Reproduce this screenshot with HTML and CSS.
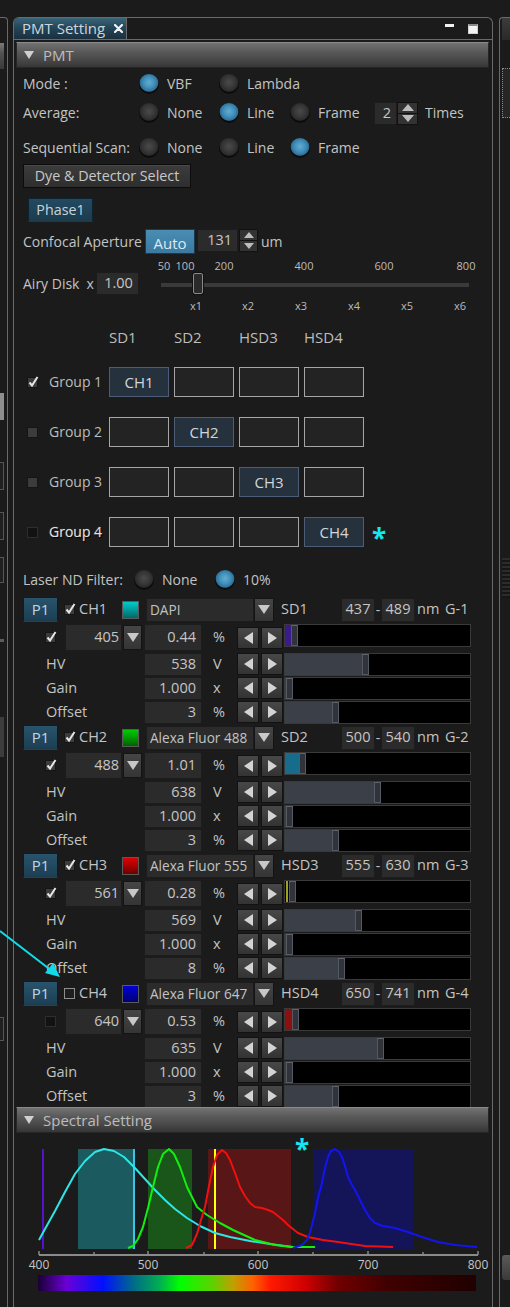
FILE: index.html
```html
<!DOCTYPE html>
<html lang="en">
<head>
<meta charset="utf-8">
<title>PMT Setting</title>
<link rel="stylesheet" href="styles.css">
</head>
<body>
<div class="desk">
  <aside class="dock-left">
    <div class="dock-left-pane">
      <div class="dl-head"></div>
      <div class="dl-item dl-light"></div>
      <div class="dl-item dl-box b1"></div>
      <div class="dl-item dl-box b2"></div>
      <div class="dl-item dl-box b3"></div>
      <div class="dl-item dl-line l1"></div>
      <div class="dl-item dl-line l2"></div>
      <div class="dl-item dl-box b4"></div>
    </div>
  </aside>

  <section class="panel">
    <div class="tabstrip">
      <div class="tab">PMT Setting
        <svg class="tab-close" width="9" height="9" viewBox="0 0 9 9"><path d="M1 1L8 8M8 1L1 8" stroke="#f2f2f2" stroke-width="2.2" stroke-linecap="round"/></svg>
      </div>
      <div class="win-btns"><span class="win-min"></span><span class="win-max"></span></div>
    </div>

    <div class="panel-body">
      <div class="group-head"><span class="caret"></span>PMT</div>

      <div class="pmt">
        <div class="opt-row">
          <span class="opt-label">Mode :</span>
          <span class="opt"><i class="radio on"></i>VBF</span>
          <span class="opt"><i class="radio"></i>Lambda</span>
        </div>
        <div class="opt-row avg">
          <span class="opt-label">Average:</span>
          <span class="opt"><i class="radio"></i>None</span>
          <span class="opt"><i class="radio on"></i>Line</span>
          <span class="opt"><i class="radio"></i>Frame</span>
          <span class="spin-wrap">
            <span class="fld spin-fld">2</span>
            <span class="spin"><span class="sp up"></span><span class="sp down"></span></span>
            <span class="times">Times</span>
          </span>
        </div>
        <div class="opt-row seq">
          <span class="opt-label">Sequential Scan:</span>
          <span class="opt"><i class="radio"></i>None</span>
          <span class="opt"><i class="radio"></i>Line</span>
          <span class="opt"><i class="radio on"></i>Frame</span>
        </div>

        <div class="btn dye-btn">Dye &amp; Detector Select</div>
        <div class="btn phase-btn">Phase1</div>

        <div class="conf-row">
          <span class="conf-label">Confocal Aperture</span>
          <span class="auto-btn">Auto</span>
          <span class="fld conf-fld">131</span>
          <span class="spin small"><span class="sp up"></span><span class="sp down"></span></span>
          <span class="um">um</span>
        </div>

        <div class="airy">
          <div class="airy-left"><span>Airy Disk</span><span class="airy-x">x</span><span class="fld airy-fld">1.00</span></div>
          <div class="slider">
            <span class="tick-top" style="left:20px">50</span>
            <span class="tick-top" style="left:41px">100</span>
            <span class="tick-top" style="left:80px">200</span>
            <span class="tick-top" style="left:160px">400</span>
            <span class="tick-top" style="left:240px">600</span>
            <span class="tick-top" style="left:322px">800</span>
            <span class="track"></span>
            <span class="knob" style="left:49px"></span>
            <span class="tick-bot" style="left:52px">x1</span>
            <span class="tick-bot" style="left:104px">x2</span>
            <span class="tick-bot" style="left:157px">x3</span>
            <span class="tick-bot" style="left:210px">x4</span>
            <span class="tick-bot" style="left:263px">x5</span>
            <span class="tick-bot" style="left:316px">x6</span>
          </div>
        </div>

        <div class="det-grid">
          <span></span><span class="det-h">SD1</span><span class="det-h">SD2</span><span class="det-h">HSD3</span><span class="det-h">HSD4</span><span></span>

          <span class="grp"><i class="chk on"><svg viewBox="0 0 12 12"><path d="M2.5 6.5L5 9.5L10.5 1" fill="none" stroke="#e6e6e6" stroke-width="2"/></svg></i>Group 1</span>
          <span class="slot on">CH1</span><span class="slot"></span><span class="slot"></span><span class="slot"></span><span></span>

          <span class="grp"><i class="chk"></i>Group 2</span>
          <span class="slot"></span><span class="slot on">CH2</span><span class="slot"></span><span class="slot"></span><span></span>

          <span class="grp"><i class="chk"></i>Group 3</span>
          <span class="slot"></span><span class="slot"></span><span class="slot on">CH3</span><span class="slot"></span><span></span>

          <span class="grp dim"><i class="chk off"></i>Group 4</span>
          <span class="slot"></span><span class="slot"></span><span class="slot"></span><span class="slot on">CH4</span><span class="mark">*</span>
        </div>

        <div class="nd-row">
          <span class="nd-label">Laser ND Filter:</span>
          <span class="opt"><i class="radio"></i>None</span>
          <span class="opt"><i class="radio on"></i>10%</span>
        </div>

        <div class="channels">
          <!-- CH1 -->
          <div class="ch">
            <div class="ch-head">
              <span class="pbtn">P1</span>
              <span class="ch-name"><i class="chk on"><svg viewBox="0 0 12 12"><path d="M2.5 6.5L5 9.5L10.5 1" fill="none" stroke="#e6e6e6" stroke-width="2"/></svg></i>CH1</span>
              <span class="swatch sw-cyan"></span>
              <span class="combo"><span class="combo-val">DAPI</span><span class="drop"></span></span>
              <span class="det">SD1</span>
              <span class="fld nm">437</span><span class="dash">-</span><span class="fld nm">489</span>
              <span class="nm-u">nm</span><span class="gname">G-1</span>
            </div>
            <div class="ch-row laser">
              <span class="lcell"><i class="chk on"><svg viewBox="0 0 12 12"><path d="M2.5 6.5L5 9.5L10.5 1" fill="none" stroke="#e6e6e6" stroke-width="2"/></svg></i></span>
              <span class="fld wl">405</span><span class="drop wl-drop"></span>
              <span class="fld val">0.44</span><span class="unit">%</span>
              <span class="step l"></span><span class="step r"></span>
              <span class="bar"><span class="fill" style="width:6px;background:#3b1a8c"></span><span class="thumb"></span></span>
            </div>
            <div class="ch-row">
              <span class="lbl">HV</span><span class="fld val">538</span><span class="unit">V</span>
              <span class="step l"></span><span class="step r"></span>
              <span class="bar"><span class="fill" style="width:77px"></span><span class="thumb"></span></span>
            </div>
            <div class="ch-row">
              <span class="lbl">Gain</span><span class="fld val">1.000</span><span class="unit">x</span>
              <span class="step l"></span><span class="step r"></span>
              <span class="bar"><span class="fill" style="width:1px"></span><span class="thumb"></span></span>
            </div>
            <div class="ch-row">
              <span class="lbl">Offset</span><span class="fld val">3</span><span class="unit">%</span>
              <span class="step l"></span><span class="step r"></span>
              <span class="bar"><span class="fill" style="width:47px"></span><span class="thumb"></span></span>
            </div>
          </div>

          <!-- CH2 -->
          <div class="ch">
            <div class="ch-head">
              <span class="pbtn">P1</span>
              <span class="ch-name"><i class="chk on"><svg viewBox="0 0 12 12"><path d="M2.5 6.5L5 9.5L10.5 1" fill="none" stroke="#e6e6e6" stroke-width="2"/></svg></i>CH2</span>
              <span class="swatch sw-green"></span>
              <span class="combo"><span class="combo-val">Alexa Fluor 488</span><span class="drop"></span></span>
              <span class="det">SD2</span>
              <span class="fld nm">500</span><span class="dash">-</span><span class="fld nm">540</span>
              <span class="nm-u">nm</span><span class="gname">G-2</span>
            </div>
            <div class="ch-row laser">
              <span class="lcell"><i class="chk on"><svg viewBox="0 0 12 12"><path d="M2.5 6.5L5 9.5L10.5 1" fill="none" stroke="#e6e6e6" stroke-width="2"/></svg></i></span>
              <span class="fld wl">488</span><span class="drop wl-drop"></span>
              <span class="fld val">1.01</span><span class="unit">%</span>
              <span class="step l"></span><span class="step r"></span>
              <span class="bar"><span class="fill" style="width:14px;background:#176c8c"></span><span class="thumb"></span></span>
            </div>
            <div class="ch-row">
              <span class="lbl">HV</span><span class="fld val">638</span><span class="unit">V</span>
              <span class="step l"></span><span class="step r"></span>
              <span class="bar"><span class="fill" style="width:89px"></span><span class="thumb"></span></span>
            </div>
            <div class="ch-row">
              <span class="lbl">Gain</span><span class="fld val">1.000</span><span class="unit">x</span>
              <span class="step l"></span><span class="step r"></span>
              <span class="bar"><span class="fill" style="width:1px"></span><span class="thumb"></span></span>
            </div>
            <div class="ch-row">
              <span class="lbl">Offset</span><span class="fld val">3</span><span class="unit">%</span>
              <span class="step l"></span><span class="step r"></span>
              <span class="bar"><span class="fill" style="width:47px"></span><span class="thumb"></span></span>
            </div>
          </div>

          <!-- CH3 -->
          <div class="ch">
            <div class="ch-head">
              <span class="pbtn">P1</span>
              <span class="ch-name"><i class="chk on"><svg viewBox="0 0 12 12"><path d="M2.5 6.5L5 9.5L10.5 1" fill="none" stroke="#e6e6e6" stroke-width="2"/></svg></i>CH3</span>
              <span class="swatch sw-red"></span>
              <span class="combo"><span class="combo-val">Alexa Fluor 555</span><span class="drop"></span></span>
              <span class="det">HSD3</span>
              <span class="fld nm">555</span><span class="dash">-</span><span class="fld nm">630</span>
              <span class="nm-u">nm</span><span class="gname">G-3</span>
            </div>
            <div class="ch-row laser">
              <span class="lcell"><i class="chk on"><svg viewBox="0 0 12 12"><path d="M2.5 6.5L5 9.5L10.5 1" fill="none" stroke="#e6e6e6" stroke-width="2"/></svg></i></span>
              <span class="fld wl">561</span><span class="drop wl-drop"></span>
              <span class="fld val">0.28</span><span class="unit">%</span>
              <span class="step l"></span><span class="step r"></span>
              <span class="bar"><span class="fill fill-line" style="width:4px"></span><span class="thumb"></span></span>
            </div>
            <div class="ch-row">
              <span class="lbl">HV</span><span class="fld val">569</span><span class="unit">V</span>
              <span class="step l"></span><span class="step r"></span>
              <span class="bar"><span class="fill" style="width:70px"></span><span class="thumb"></span></span>
            </div>
            <div class="ch-row">
              <span class="lbl">Gain</span><span class="fld val">1.000</span><span class="unit">x</span>
              <span class="step l"></span><span class="step r"></span>
              <span class="bar"><span class="fill" style="width:1px"></span><span class="thumb"></span></span>
            </div>
            <div class="ch-row">
              <span class="lbl">Offset</span><span class="fld val">8</span><span class="unit">%</span>
              <span class="step l"></span><span class="step r"></span>
              <span class="bar"><span class="fill" style="width:53px"></span><span class="thumb"></span></span>
            </div>
          </div>

          <!-- CH4 -->
          <div class="ch">
            <div class="ch-head">
              <span class="pbtn">P1</span>
              <span class="ch-name"><i class="chk box"></i>CH4</span>
              <span class="swatch sw-blue"></span>
              <span class="combo"><span class="combo-val">Alexa Fluor 647</span><span class="drop"></span></span>
              <span class="det">HSD4</span>
              <span class="fld nm">650</span><span class="dash">-</span><span class="fld nm">741</span>
              <span class="nm-u">nm</span><span class="gname">G-4</span>
            </div>
            <div class="ch-row laser">
              <span class="lcell"><i class="chk off"></i></span>
              <span class="fld wl">640</span><span class="drop wl-drop"></span>
              <span class="fld val">0.53</span><span class="unit">%</span>
              <span class="step l"></span><span class="step r"></span>
              <span class="bar"><span class="fill" style="width:7px;background:#8c1010"></span><span class="thumb"></span></span>
            </div>
            <div class="ch-row">
              <span class="lbl">HV</span><span class="fld val">635</span><span class="unit">V</span>
              <span class="step l"></span><span class="step r"></span>
              <span class="bar"><span class="fill" style="width:92px"></span><span class="thumb"></span></span>
            </div>
            <div class="ch-row">
              <span class="lbl">Gain</span><span class="fld val">1.000</span><span class="unit">x</span>
              <span class="step l"></span><span class="step r"></span>
              <span class="bar"><span class="fill" style="width:1px"></span><span class="thumb"></span></span>
            </div>
            <div class="ch-row">
              <span class="lbl">Offset</span><span class="fld val">3</span><span class="unit">%</span>
              <span class="step l"></span><span class="step r"></span>
              <span class="bar"><span class="fill" style="width:47px"></span><span class="thumb"></span></span>
            </div>
          </div>
        </div>
      </div>

      <div class="group-head spectral-head"><span class="caret"></span>Spectral Setting</div>

      <svg class="spectrum" width="478" height="184" viewBox="14 1123 478 184">
        <defs>
          <linearGradient id="vis" x1="0" x2="1" y1="0" y2="0">
            <stop offset="0" stop-color="#1a0033"/>
            <stop offset="0.066" stop-color="#6a00d8"/>
            <stop offset="0.148" stop-color="#0010ff"/>
            <stop offset="0.217" stop-color="#006a8a"/>
            <stop offset="0.279" stop-color="#00b050"/>
            <stop offset="0.324" stop-color="#00ff00"/>
            <stop offset="0.4" stop-color="#60d000"/>
            <stop offset="0.445" stop-color="#c0a000"/>
            <stop offset="0.491" stop-color="#ff6000"/>
            <stop offset="0.53" stop-color="#ff1a00"/>
            <stop offset="0.61" stop-color="#d00000"/>
            <stop offset="0.685" stop-color="#700000"/>
            <stop offset="0.8" stop-color="#400000"/>
            <stop offset="1" stop-color="#200000"/>
          </linearGradient>
        </defs>
        <!-- detection windows -->
        <rect x="78" y="1149" width="56" height="100" fill="#1b5b5f"/>
        <rect x="148" y="1149" width="44" height="100" fill="#1a561a"/>
        <rect x="208" y="1149" width="83" height="100" fill="#581616"/>
        <rect x="313" y="1149" width="100" height="100" fill="#141458"/>
        <!-- laser lines -->
        <rect x="42" y="1149" width="2" height="100" fill="#5512cc"/>
        <rect x="133" y="1149" width="2" height="100" fill="#3cc4e6"/>
        <rect x="214" y="1149" width="2" height="100" fill="#ffff10"/>
        <!-- emission curves -->
        <polyline fill="none" stroke="#2ee6e6" stroke-width="2" stroke-linejoin="round" points="39,1240 45,1229 55,1211 65,1192 75,1174 85,1161 95,1152 104,1149 114,1151 124,1157 134,1167 145,1179 155,1190 165,1200 175,1209 187,1218 200,1226 215,1233 230,1237 250,1241 270,1244 292,1247"/>
        <polyline fill="none" stroke="#10f010" stroke-width="2" stroke-linejoin="round" points="128,1248 133,1246 138,1239 143,1227 148,1208 153,1187 158,1167 163,1154 169,1149 174,1154 180,1167 187,1187 197,1207 207,1215 220,1223 233,1230 255,1240 275,1245 293,1247 315,1247"/>
        <polyline fill="none" stroke="#f01010" stroke-width="2" stroke-linejoin="round" points="186,1248 192,1245 197,1234 201,1220 205,1207 209,1186 213,1167 217,1155 222,1150 226,1153 230,1160 235,1173 240,1187 245,1196 250,1203 255,1207 262,1208 268,1210 273,1212 278,1216 283,1220 288,1225 298,1233 308,1237 323,1240 338,1242 365,1246 393,1247"/>
        <polyline fill="none" stroke="#1414f0" stroke-width="2" stroke-linejoin="round" points="293,1248 302,1245 307,1240 310,1233 315,1213 318,1198 322,1183 325,1168 328,1157 331,1151 335,1149 339,1152 342,1157 345,1166 348,1177 352,1185 355,1190 360,1200 365,1210 370,1218 375,1223 383,1226 395,1228 408,1232 422,1237 438,1242 455,1245 477,1247"/>
        <!-- wavelength axis -->
        <line x1="39" y1="1255" x2="478" y2="1255" stroke="#8a8a8a" stroke-width="2"/>
        <g stroke="#8a8a8a" stroke-width="1.5">
          <line x1="39" y1="1251" x2="39" y2="1255"/>
          <line x1="94" y1="1252" x2="94" y2="1255"/>
          <line x1="148" y1="1251" x2="148" y2="1255"/>
          <line x1="204" y1="1252" x2="204" y2="1255"/>
          <line x1="258" y1="1251" x2="258" y2="1255"/>
          <line x1="313" y1="1252" x2="313" y2="1255"/>
          <line x1="368" y1="1251" x2="368" y2="1255"/>
          <line x1="423" y1="1252" x2="423" y2="1255"/>
          <line x1="478" y1="1251" x2="478" y2="1255"/>
        </g>
        <g class="axis-txt" text-anchor="middle">
          <text x="39" y="1269">400</text>
          <text x="148" y="1269">500</text>
          <text x="258" y="1269">600</text>
          <text x="368" y="1269">700</text>
          <text x="478" y="1269">800</text>
        </g>
        <rect x="38" y="1275" width="438" height="16" fill="url(#vis)"/>
        <text class="spec-mark" x="302" y="1159" text-anchor="middle">*</text>
      </svg>
    </div>
  </section>

  <aside class="dock-right">
    <div class="dock-right-pane">
      <div class="dr-tab"></div>
      <div class="dr-scroll"></div>
      <div class="dr-rail"></div>
      <div class="dr-btn"></div>
    </div>
  </aside>
</div>

<svg class="callout" width="70" height="60" viewBox="0 925 70 60">
  <line x1="0" y1="931" x2="52" y2="971" stroke="#12dcea" stroke-width="2"/>
  <polygon points="60,977 45,973 53,963" fill="#12dcea"/>
</svg>
</body>
</html>
```

FILE: styles.css
```css
* { box-sizing: border-box; margin: 0; padding: 0; }

html, body { background: #1b1b1b; }

body {
  width: 510px;
  height: 1307px;
  overflow: hidden;
  position: relative;
  font-family: "Open Sans", "Noto Sans", "DejaVu Sans", sans-serif;
  font-size: 14px;
  line-height: 1;
  color: #c3c3c3;
}

.desk {
  display: flex;
  height: 1307px;
  padding-top: 17px;
}

/* ---- neighbouring docked panes ---- */
.dock-left { width: 13px; flex: none; }
.dock-left-pane {
  width: 8px;
  height: 100%;
  border-top: 1px solid #6a6a6a;
  border-right: 1px solid #6a6a6a;
  border-top-right-radius: 4px;
  display: flex;
  flex-direction: column;
}
.dl-head {
  margin-top: 25px;
  height: 26px;
  width: 4px;
  background: linear-gradient(#7a7a7a, #525252 40%, #3a3a3a);
}
.dl-item { width: 4px; flex: none; }
.dl-light { margin-top: 324px; height: 27px; background: #8e8e8e; }
.dl-box { border: 1px solid #555; border-left: 0; background: #202020; }
.b1 { margin-top: 42px; height: 28px; }
.b2 { margin-top: 22px; height: 28px; }
.b3 { margin-top: 17px; height: 26px; }
.dl-line { height: 3px; background: #5c5c5c; }
.l1 { margin-top: 56px; }
.l2 { margin-top: 75px; height: 40px; background: #3c3c3c; }
.b4 { margin-top: 260px; height: 24px; }

.dock-right { width: 17px; flex: none; }
.dock-right-pane {
  margin-left: 6px;
  height: 100%;
  border-left: 1px solid #6a6a6a;
  border-top: 1px solid #6a6a6a;
  border-top-left-radius: 4px;
  display: flex;
  flex-direction: column;
  padding-left: 2px;
}
.dr-tab { height: 22px; background: linear-gradient(#3c3c3c, #2a2a2a); }
.dr-scroll {
  margin-top: 28px;
  height: 50px;
  border: 1px dotted #8a8a8a;
  border-right: 0;
  background: #262626;
}
.dr-rail { margin-top: 440px; height: 40px; background: repeating-linear-gradient(#2c2c2c 0 2px, #161616 2px 4px); }
.dr-btn {
  margin-top: 657px;
  height: 25px;
  border-radius: 3px 0 0 3px;
  background: linear-gradient(#5a5a5a, #3a3a3a);
}

/* ---- main panel frame ---- */
.panel {
  width: 480px;
  flex: none;
  border: 1px solid #6a6a6a;
  border-bottom: 0;
  border-radius: 6px 6px 0 0;
  display: flex;
  flex-direction: column;
}

.tabstrip { height: 23px; display: flex; align-items: stretch; }
.tab {
  width: 113px;
  border-right: 1px solid #6a6a6a;
  border-top-left-radius: 5px;
  background: linear-gradient(#3b6579, #24465a 45%, #1a3040);
  display: flex;
  align-items: center;
  gap: 9px;
  padding-left: 8px;
  font-size: 15px;
  color: #cdd6dc;
}
.tab-close { display: block; }

.win-btns {
  margin-left: auto;
  display: flex;
  align-items: flex-start;
  padding-top: 6px;
}
.win-min { width: 9px; height: 3px; background: #f0f0f0; margin-right: 14px; }
.win-max {
  width: 10px;
  height: 10px;
  background: #f4f4f4;
  border: 1px solid #cfcfcf;
  border-top: 2px solid #8a8a8a;
  margin-right: 14px;
}

.panel-body {
  flex: 1;
  border-top: 1px solid #6a6a6a;
  display: flex;
  flex-direction: column;
}

.group-head {
  margin: 2px 3px 0 2px;
  height: 26px;
  flex: none;
  border: 1px solid #262626;
  border-top-color: #8a8a8a;
  background: linear-gradient(#727272, #5a5a5a 35%, #484848 70%, #363636);
  display: flex;
  align-items: center;
  gap: 9px;
  padding-left: 7px;
  font-size: 15px;
  color: #bdbdbd;
}
.spectral-head { margin-top: -1px; position: relative; }
.caret {
  width: 0;
  height: 0;
  border-style: solid;
  border-width: 8px 5px 0 5px;
  border-color: #d0d0d0 transparent transparent transparent;
}

/* ---- PMT section ---- */
.pmt {
  padding: 4px 0 0 9px;
  display: flex;
  flex-direction: column;
}

.opt-row {
  height: 24px;
  display: grid;
  grid-template-columns: 116px 80px 71px 84px auto;
  align-items: center;
}
.opt-row.avg { margin-top: 5px; }
.opt-row.seq { margin-top: 11px; }
.opt { display: flex; align-items: center; gap: 8px; }

.radio {
  width: 20px;
  height: 20px;
  flex: none;
  border-radius: 50%;
  background: radial-gradient(circle at 50% 42%, #4a4a4a 0, #363636 40%, #2a2a2a 58%, #0b0b0b 64%, #0b0b0b 88%, #262626 100%);
}
.radio.on {
  background: radial-gradient(circle at 50% 42%, #62acd4 0, #4290ba 35%, #2d709a 58%, #0b0b0b 64%, #0b0b0b 88%, #262626 100%);
}

.spin-wrap { display: flex; align-items: center; height: 24px; }
.spin-fld { width: 23px; height: 23px; justify-content: center; padding: 0; font-size: 14.5px; }
.spin { display: flex; flex-direction: column; width: 21px; height: 23px; background: #111; padding: 1px; gap: 1px; }
.spin.small { width: 19px; height: 23px; }
.sp { flex: 1; background: #333; display: flex; align-items: center; justify-content: center; }
.sp.up::before {
  content: "";
  border-style: solid;
  border-width: 0 6px 7px 6px;
  border-color: transparent transparent #bdbdbd transparent;
}
.sp.down::before {
  content: "";
  border-style: solid;
  border-width: 7px 6px 0 6px;
  border-color: #bdbdbd transparent transparent transparent;
}
.spin.small .sp.up::before { border-width: 0 5px 6px 5px; }
.spin.small .sp.down::before { border-width: 6px 5px 0 5px; }
.times { margin-left: 7px; font-size: 14px; }

.btn {
  height: 24px;
  display: flex;
  align-items: center;
  justify-content: center;
  font-size: 14.3px;
}
.dye-btn {
  margin-top: 4px;
  width: 168px;
  border: 1px solid #0c0c0c;
  background: linear-gradient(#3c3c3c, #2e2e2e);
  box-shadow: inset 0 1px 0 #4a4a4a;
  color: #c8c8c8;
}
.phase-btn {
  margin: 10px 0 0 5px;
  width: 65px;
  border: 1px solid #0f2230;
  border-bottom-color: #333;
  background: linear-gradient(#234a60, #1c3b4e);
  color: #c8d4dc;
}

.conf-row { margin-top: 7px; height: 25px; display: flex; align-items: center; }
.conf-label { width: 122px; white-space: nowrap; }
.auto-btn {
  width: 50px;
  height: 25px;
  display: flex;
  align-items: center;
  justify-content: center;
  background: linear-gradient(#4a8cb2, #3a7aa2);
  border: 1px solid #1a3a50;
  color: #dbe9f2;
  font-size: 15px;
  padding-top: 3px;
}
.conf-fld { margin-left: 2px; width: 41px; height: 23px; align-self: flex-start; justify-content: flex-start; padding-left: 8px; font-size: 15px; }
.conf-row .spin { align-self: flex-start; margin-left: 1px; height: 23px; }
.um { margin-left: 3px; font-size: 14px; }

.airy {
  margin-top: 4px;
  display: grid;
  grid-template-columns: 121px 1fr;
  grid-template-rows: 14px 23px 16px;
}
.airy-left { grid-row: 2; display: flex; align-items: center; }
.airy-x { margin-left: 7px; }
.airy-fld { margin-left: 2px; width: 43px; height: 23px; justify-content: flex-start; padding-left: 4px; font-size: 15px; }
.slider { grid-column: 2; grid-row: 1 / 4; position: relative; }
.tick-top, .tick-bot {
  position: absolute;
  transform: translateX(-50%);
  font-size: 11px;
  color: #bcbcbc;
}
.tick-top { top: 2px; }
.tick-bot { top: 42px; }
.track { position: absolute; left: 17px; width: 308px; top: 25px; height: 4px; background: #3a3a3a; }
.knob {
  position: absolute;
  top: 15px;
  width: 10px;
  height: 21px;
  border-radius: 2px;
  background: #2a2a2a;
  border: 1px solid #8a8a8a;
  box-shadow: 0 0 0 1px #111;
}

/* detector / group matrix */
.det-grid {
  margin-top: 17px;
  display: grid;
  grid-template-columns: 81px 60px 60px 60px 60px 30px;
  grid-template-rows: 19px 30px 30px 30px 30px;
  column-gap: 5px;
  row-gap: 20px;
  align-items: center;
}
.det-h { font-size: 15px; color: #bdbdbd; }
.grp { display: flex; align-items: center; gap: 11px; padding-left: 4px; font-size: 14px; color: #bdbdbd; white-space: nowrap; }
.grp.dim { color: #e2e2e2; text-shadow: 1px 1px 1px #000, 0 0 1px #888; }
.slot {
  height: 30px;
  border: 1px solid #a6a6a6;
  background: #232323;
  display: flex;
  align-items: center;
  justify-content: center;
  font-size: 15px;
  color: #d2d6da;
}
.slot.on { border-color: #4d5d78; background: #25323e; }
.mark { padding-left: 3px; font-size: 26px; font-weight: 700; color: #14e6f2; line-height: 1; margin-top: 12px; }

.chk {
  display: block;
  position: relative;
  width: 11px;
  height: 11px;
  flex: none;
  background: #3c3c3c;
  border: 1px solid #151515;
}
.chk svg { position: absolute; left: -1px; top: -2px; width: 12px; height: 12px; overflow: visible; }
.chk.off { background: #121212; border-color: #2e2e2e; }
.chk.box { background: #1e1e1e; border-color: #8e8e8e; }

.nd-row {
  margin-top: 22px;
  height: 22px;
  display: grid;
  grid-template-columns: 111px 81px auto;
  align-items: center;
}

/* ---- channel blocks ---- */
.channels { margin-top: 5px; display: flex; flex-direction: column; }
.ch { height: 128px; display: flex; flex-direction: column; }

.ch-head { height: 27px; display: flex; align-items: center; font-size: 14px; }
.pbtn {
  width: 35px;
  height: 25px;
  display: flex;
  align-items: center;
  justify-content: center;
  background: linear-gradient(#28546c, #1c3e52);
  border: 1px solid #0c1c26;
  border-bottom-color: #3a3a3a;
  color: #c6d6e0;
  font-size: 15px;
}
.ch-name { width: 58px; margin-left: 6px; display: flex; align-items: center; gap: 4px; font-size: 14.5px; }
.swatch { width: 17px; height: 18px; border: 1px solid #5a5a5a; }
.sw-cyan { background: linear-gradient(#00cccc, #006868); }
.sw-green { background: linear-gradient(#00cc00, #006200); }
.sw-red { background: linear-gradient(#e00000, #6c0000); }
.sw-blue { background: linear-gradient(#0000d8, #000070); }
.combo { margin-left: 7px; width: 128px; height: 24px; display: flex; }
.combo-val {
  flex: 1;
  background: #2b2b2b;
  border: 1px solid #1c1c1c;
  display: flex;
  align-items: center;
  padding-left: 3px;
  font-size: 13.6px;
  white-space: nowrap;
  overflow: hidden;
}
.drop {
  width: 20px;
  flex: none;
  background: linear-gradient(#454545, #353535);
  border: 1px solid #141414;
  display: flex;
  align-items: center;
  justify-content: center;
}
.drop::before {
  content: "";
  border-style: solid;
  border-width: 9px 6px 0 6px;
  border-color: #c8c8c8 transparent transparent transparent;
}
.det { margin-left: 7px; width: 60px; font-size: 14.5px; }
.fld {
  background: #2b2b2b;
  border: 1px solid #1c1c1c;
  display: flex;
  align-items: center;
  justify-content: flex-end;
  padding-right: 5px;
  font-size: 14.5px;
  color: #c6c6c6;
}
.fld.nm { width: 34px; height: 24px; justify-content: center; padding: 0; }
.dash { width: 6px; text-align: center; }
.nm-u { margin-left: 2px; width: 28px; font-size: 14.5px; }
.gname { font-size: 14.5px; }

.ch-row { height: 24px; display: flex; align-items: center; }
.ch-row.laser { height: 29px; }
.lcell { width: 42px; padding-left: 22px; }
.lbl { width: 121px; padding-left: 23px; font-size: 14.5px; }
.fld.wl { width: 57px; height: 27px; padding-right: 2px; }
.wl-drop { margin-left: 1px; width: 19px; height: 25px; }
.fld.val { margin-left: 0; width: 58px; height: 23px; }
.laser .fld.val { margin-left: 2px; height: 27px; }
.unit { width: 35px; padding-left: 11px; font-size: 14.5px; }
.step {
  width: 22px;
  height: 22px;
  background: linear-gradient(#484848, #333);
  border: 1px solid #121212;
  display: flex;
  align-items: center;
  justify-content: center;
}
.step.r { margin-left: 2px; }
.step.l::before {
  content: "";
  border-style: solid;
  border-width: 6px 9px 6px 0;
  border-color: transparent #d4d4d4 transparent transparent;
}
.step.r::before {
  content: "";
  border-style: solid;
  border-width: 6px 0 6px 9px;
  border-color: transparent transparent transparent #d4d4d4;
}
.bar {
  margin-left: 1px;
  width: 187px;
  height: 23px;
  background: #000;
  border: 1px solid #3a3a3a;
  display: flex;
}
.laser .bar { align-self: flex-start; margin-top: 1px; }
.fill { background: #3b3f48; flex: none; }
.fill-line { background: linear-gradient(to right, transparent 1px, #a0a020 1px, #a0a020 3px, transparent 3px); }
.thumb { width: 7px; flex: none; background: #30343a; border: 1px solid #555a62; border-top-color: #60646c; }

/* ---- spectral plot ---- */
.spectrum { display: block; flex: none; margin-top: -10px; }
.axis-txt text { font-family: "Open Sans", "Noto Sans", sans-serif; font-size: 12px; fill: #c6c6c6; }
.spec-mark { font-family: "Open Sans", sans-serif; font-size: 26px; font-weight: 700; fill: #14e6f2; }

/* ---- callout arrow drawn over the page ---- */
.callout { position: absolute; left: 0; top: 925px; }
```
